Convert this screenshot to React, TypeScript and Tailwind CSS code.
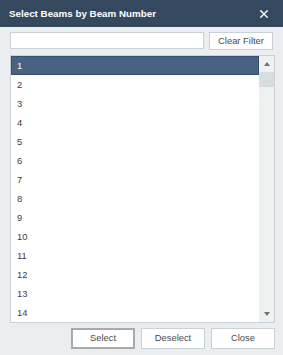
import React from "react";

const rows = Array.from({ length: 14 }, (_, i) => String(i + 1));

export default function App() {
  return (
    <div
      className="w-[283px] h-[355px] bg-[#eaeef0] flex flex-col overflow-hidden"
      style={{ fontFamily: '"Liberation Sans", Arial, sans-serif' }}
    >
      <div className="h-[27px] bg-[#34495e] flex items-center justify-between pl-[9px] pr-[15px] shrink-0">
        <span className="text-white font-bold text-[9.8px] leading-none">Select Beams by Beam Number</span>
        <svg width="8" height="8" viewBox="0 0 8 8" className="block">
          <path d="M0.8 0.8 L7.2 7.2 M7.2 0.8 L0.8 7.2" stroke="#ffffff" strokeWidth="1.4" strokeLinecap="square" />
        </svg>
      </div>
      <div className="flex flex-col pl-[10px] pr-[8px] pt-[5px]">
        <div className="flex items-start gap-[5px]">
          <div className="w-[194px] h-[17px] bg-white border border-[#c9d1d5]" />
          <div className="w-[64px] h-[18px] bg-white border border-[#c9d1d5] flex items-center justify-center text-[9.4px] text-[#4a4a4a]">
            Clear Filter
          </div>
        </div>
        <div className="mt-[5px] h-[268px] bg-white border border-[#c9d1d5] flex overflow-hidden">
          <div className="flex-1 flex flex-col">
            {rows.map((r, i) => (
              <div
                key={r}
                className={
                  i === 0
                    ? "h-[19px] shrink-0 flex items-center pl-[5px] pt-[1px] bg-[#486381] border border-[#34506e] text-white text-[9.4px]"
                    : "h-[19px] shrink-0 flex items-center pl-[6px] pt-[1px] text-[#3f3a3a] text-[9.4px]"
                }
              >
                {r}
              </div>
            ))}
          </div>
          <div className="w-[15px] bg-[#eef1f2] flex flex-col items-stretch">
            <div className="h-[16px] flex items-center justify-center">
              <svg width="6" height="4" viewBox="0 0 6 4"><path d="M0 4 L3 0 L6 4 Z" fill="#707070" /></svg>
            </div>
            <div className="h-[15px] bg-[#d6dde0]" />
            <div className="flex-1" />
            <div className="h-[16px] flex items-center justify-center">
              <svg width="6" height="4" viewBox="0 0 6 4"><path d="M0 0 L3 4 L6 0 Z" fill="#707070" /></svg>
            </div>
          </div>
        </div>
        <div className="mt-[5px] flex justify-end gap-[6px]">
          <div className="w-[64px] h-[21px] bg-white border-2 border-[#a9a9a9] flex items-center justify-center text-[9.4px] text-[#4a4a4a]">
            Select
          </div>
          <div className="w-[64px] h-[21px] bg-white border border-[#c9d1d5] flex items-center justify-center text-[9.4px] text-[#4a4a4a]">
            Deselect
          </div>
          <div className="w-[64px] h-[21px] bg-white border border-[#c9d1d5] flex items-center justify-center text-[9.4px] text-[#4a4a4a]">
            Close
          </div>
        </div>
      </div>
    </div>
  );
}
